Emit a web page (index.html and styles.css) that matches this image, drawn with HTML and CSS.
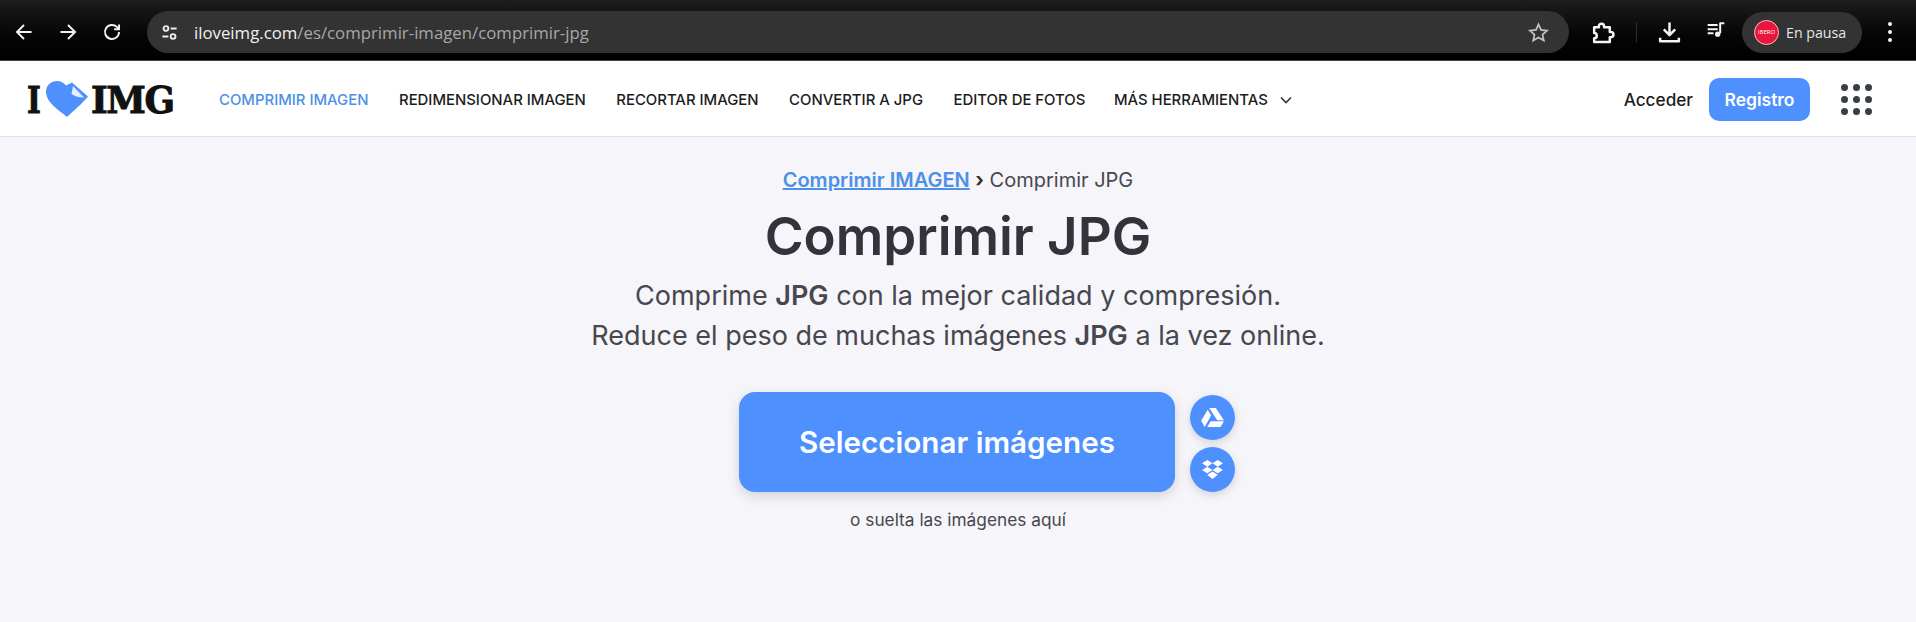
FILE: index.html
```html
<!DOCTYPE html>
<html lang="es">
<head>
  <meta charset="UTF-8">
  <meta name="viewport" content="width=device-width, initial-scale=1.0">
  <title>Comprimir JPG</title>
  <link rel="stylesheet" href="styles.css">
</head>
<body>
  <div class="browser-bar">
    <div class="browser-nav">
      <svg class="chrome-icon" viewBox="0 0 24 24"><path d="M19 12H6M12 5.500 5.500 12l6.500 6.500"/></svg>
      <svg class="chrome-icon" viewBox="0 0 24 24"><path d="M5 12h13M12 5.500l6.500 6.500-6.500 6.500"/></svg>
      <svg class="chrome-icon" viewBox="0 0 24 24"><path d="M18.500 12a6.500 6.500 0 1 1-2-4.700L18.500 9.500M18.500 5v4.500H14"/></svg>
    </div>
    <div class="address-bar">
      <span class="site-chip">
        <svg viewBox="0 0 24 24" class="tune-icon"><circle cx="7.500" cy="7" r="3"/><path d="M13.500 7H21M3 17h7.500"/><circle cx="16.500" cy="17" r="3"/></svg>
      </span>
      <span class="url"><span class="url-host">iloveimg.com</span>/es/comprimir-imagen/comprimir-jpg</span>
      <svg class="star-icon" viewBox="0 0 24 24"><path d="M12 3.500l2.600 5.800 6.300.7-4.700 4.200 1.300 6.200L12 17.200l-5.500 3.200 1.300-6.200L3.100 10l6.300-.7z"/></svg>
    </div>
    <div class="browser-tools">
      <svg class="tool-icon" viewBox="0 0 24 24"><path d="M4 7h4.500V6a2.500 2.500 0 0 1 5 0v1H19v4.500h1a2.500 2.500 0 0 1 0 5h-1V21H4v-3.500a2.500 2.500 0 0 0 0-5z"/></svg>
      <span class="tool-sep"></span>
      <svg class="tool-icon" viewBox="0 0 24 24"><path d="M12 2.500V14M6.500 9l5.500 5.500L17.500 9M3 17v3.500h18V17"/></svg>
      <svg class="tool-icon media-icon" viewBox="0 0 24 24"><path d="M2 6h12M2 11h12M2 16h7M17 16V4h5"/><circle cx="14" cy="17" r="3.200" class="solid"/></svg>
      <div class="profile-pill">
        <span class="avatar">IBERO</span>
        <span>En pausa</span>
      </div>
      <div class="kebab"><i></i><i></i><i></i></div>
    </div>
  </div>

  <header class="site-header">
    <a class="logo">
      <span class="logo-i">I</span>
      <svg class="logo-heart" viewBox="0 0 42 36">
        <path d="M21 36C13 29 .5 22 0 11.500-.3 4.500 5 0 11 0c4 0 6.500 1.500 9 4.500L26 1.500 42 15.500C35 24 28 29 21 36z" fill="#4d90fe"/>
        <path d="M27 5 25.500 13c3 2.500 8 3.500 12.500 3.500z" fill="#e6eefc"/>
      </svg>
      <span class="logo-img">IMG</span>
    </a>
    <nav class="main-nav">
      <a class="active">COMPRIMIR IMAGEN</a>
      <a>REDIMENSIONAR IMAGEN</a>
      <a>RECORTAR IMAGEN</a>
      <a>CONVERTIR A JPG</a>
      <a>EDITOR DE FOTOS</a>
      <a class="more">MÁS HERRAMIENTAS
        <svg viewBox="0 0 12 8"><path d="M1 1.500l5 5 5-5"/></svg>
      </a>
    </nav>
    <div class="header-right">
      <a class="login">Acceder</a>
      <a class="signup">Registro</a>
      <div class="apps-grid">
        <i></i><i></i><i></i><i></i><i></i><i></i><i></i><i></i><i></i>
      </div>
    </div>
  </header>

  <main class="tool-page">
    <p class="crumbs"><a>Comprimir IMAGEN</a> <b>›</b> Comprimir JPG</p>
    <h1>Comprimir JPG</h1>
    <h2>Comprime <b>JPG</b> con la mejor calidad y compresión.<br>Reduce el peso de muchas imágenes <b>JPG</b> a la vez online.</h2>
    <div class="picker">
      <a class="pick-btn">Seleccionar imágenes</a>
      <div class="pick-side">
        <a class="cloud-btn">
          <svg viewBox="0 0 24 20"><path d="M8.500 0h7l8.500 13h-7zM7 1.800l3.500 6L3.800 20 0 13.500zM10 14h14l-3.500 6H6.500z"/></svg>
        </a>
        <a class="cloud-btn">
          <svg viewBox="0 0 24 20"><path d="M6.500 0 12 3.500 6.500 7 1 3.500zM17.500 0 23 3.500 17.500 7 12 3.500zM1 10.500 6.500 7 12 10.500 6.500 14zM17.500 7 23 10.500 17.500 14 12 10.500zM6.500 15.500 12 12l5.500 3.500L12 20z"/></svg>
        </a>
      </div>
    </div>
    <p class="drop-hint">o suelta las imágenes aquí</p>
  </main>
</body>
</html>
```

FILE: styles.css
```css
* {
  box-sizing: border-box;
}
body {
  margin: 0;
  height: 622px;
  overflow: hidden;
  background: #f5f5fa;
  font-family: Inter, "Liberation Sans", sans-serif;
  color: #383e45;
}
a {
  text-decoration: none;
}

/* browser chrome */
.browser-bar {
  height: 61px;
  display: flex;
  align-items: center;
  padding-top: 4px;
  background: linear-gradient(#1e1e1e, #141414 20%, #050505 60%, #000);
  border-bottom: 1px solid #444;
}
.browser-nav {
  width: 147px;
  display: flex;
  gap: 18px;
  padding-left: 11px;
}
.chrome-icon {
  width: 26px;
  height: 26px;
  fill: none;
  stroke: #f1f1f1;
  stroke-width: 1.800;
}
.address-bar {
  width: 1422px;
  height: 42px;
  display: flex;
  align-items: center;
  background: #333;
  border-radius: 21px;
  padding: 0 19px 0 9px;
}
.site-chip {
  width: 26px;
  height: 26px;
  margin-right: 12px;
  display: flex;
  align-items: center;
  justify-content: center;
}
.tune-icon {
  width: 19px;
  height: 19px;
  fill: none;
  stroke: #eee;
  stroke-width: 2.400;
}
.url {
  flex: 1;
  font-family: "Open Sans", sans-serif;
  font-size: 16.800px;
  color: #a8a8a8;
}
.url-host {
  color: #f0f0f0;
}
.star-icon {
  width: 23px;
  height: 23px;
  fill: none;
  stroke: #c4c4c4;
  stroke-width: 1.800;
}
.browser-tools {
  flex: 1;
  display: flex;
  align-items: center;
  padding-left: 21px;
}
.tool-icon {
  width: 25px;
  height: 25px;
  fill: none;
  stroke: #f4f4f4;
  stroke-width: 2.400;
  stroke-linejoin: round;
}
.tool-sep {
  width: 1px;
  height: 20px;
  margin: 0 20px 0 21px;
  background: #2e2e2e;
}
.media-icon {
  width: 20px;
  height: 20px;
  margin: -4px 16px 0 24px;
}
.solid {
  fill: #f4f4f4;
  stroke: none;
}
.profile-pill {
  width: 120px;
  height: 41px;
  display: flex;
  align-items: center;
  gap: 7px;
  padding-left: 12px;
  border-radius: 21px;
  background: #333;
  font-family: "Open Sans", sans-serif;
  font-size: 14.200px;
  color: #e6e6e6;
}
.avatar {
  width: 25px;
  height: 25px;
  border-radius: 50%;
  background: #e8163c;
  border: 1px solid #fbb;
  color: #fff;
  font-size: 6px;
  line-height: 23px;
  text-align: center;
  overflow: hidden;
}
.kebab {
  display: flex;
  flex-direction: column;
  gap: 4px;
  margin-left: 26px;
}
.kebab i {
  width: 4px;
  height: 4px;
  border-radius: 50%;
  background: #f4f4f4;
}

/* site header */
.site-header {
  height: 76px;
  display: flex;
  align-items: center;
  padding: 2px 44px 0 27px;
  background: #fff;
  border-bottom: 1px solid #dfdfe8;
}
.logo {
  width: 192px;
  display: flex;
  align-items: center;
  gap: 3px;
  font-family: "DejaVu Serif", serif;
  font-weight: bold;
  font-size: 38px;
  color: #111;
  -webkit-text-stroke: 1px #111;
}
.logo-i {
  width: 16px;
  transform: scaleX(0.78);
  transform-origin: left;
}
.logo-heart {
  width: 42px;
  height: 36px;
  margin-top: -2px;
  flex: none;
}
.logo-img {
  letter-spacing: -1.500px;
  transform: scaleX(0.94);
  transform-origin: left;
}
.main-nav {
  display: flex;
  gap: 30.500px;
  font-size: 14.900px;
  font-weight: 500;
  color: #1c1c1c;
}
.main-nav .active {
  color: #4d90e8;
}
.more {
  display: flex;
  align-items: center;
  gap: 12px;
  margin-left: -2px;
}
.more svg {
  width: 12px;
  height: 8px;
  fill: none;
  stroke: #333;
  stroke-width: 1.600;
}
.header-right {
  margin-left: auto;
  display: flex;
  align-items: center;
}
.login {
  font-size: 17.200px;
  font-weight: 500;
  color: #1c1c1c;
}
.signup {
  width: 101px;
  height: 43px;
  margin: 0 31px 0 16px;
  border-radius: 10px;
  background: #4d90fe;
  color: #fff;
  font-size: 17.500px;
  font-weight: 600;
  line-height: 43px;
  text-align: center;
}
.apps-grid {
  display: grid;
  grid-template-columns: repeat(3, 7px);
  gap: 5px;
}
.apps-grid i {
  width: 7px;
  height: 7px;
  border-radius: 50%;
  background: #383e45;
}

/* main tool */
.tool-page {
  text-align: center;
}
.crumbs {
  margin: 0;
  padding-top: 30px;
  font-size: 20px;
  line-height: 26px;
  color: #47474f;
}
.crumbs a {
  color: #4d90e8;
  font-weight: 600;
  text-decoration: underline;
}
.crumbs b {
  color: #333;
}
h1 {
  margin: 9px 0 0;
  font-size: 52.800px;
  line-height: 68px;
  font-weight: 600;
  color: #33333b;
}
h2 {
  margin: 6px 0 0;
  font-size: 27px;
  line-height: 40px;
  font-weight: 400;
  color: #47474f;
}
h2 b {
  font-weight: 600;
}
.picker {
  display: grid;
  grid-template-columns: 1fr 436px 1fr;
  margin-top: 36px;
  padding-right: 2px;
}
.pick-btn {
  grid-column: 2;
  height: 100px;
  border-radius: 16px;
  background: #4d90fe;
  color: #fff;
  font-size: 29.600px;
  font-weight: 600;
  line-height: 100px;
  box-shadow: 0 4px 12px rgba(72, 76, 97, 0.2);
}
.pick-side {
  display: flex;
  flex-direction: column;
  gap: 7px;
  padding: 3px 0 0 15px;
}
.cloud-btn {
  width: 45px;
  height: 45px;
  display: flex;
  align-items: center;
  justify-content: center;
  border-radius: 50%;
  background: #4d90fe;
  box-shadow: 0 3px 8px rgba(72, 76, 97, 0.2);
}
.cloud-btn svg {
  width: 23px;
  height: 19px;
  fill: #fff;
}
.drop-hint {
  margin: 17px 0 0;
  font-size: 17.300px;
  line-height: 22px;
  color: #47474f;
}
```
